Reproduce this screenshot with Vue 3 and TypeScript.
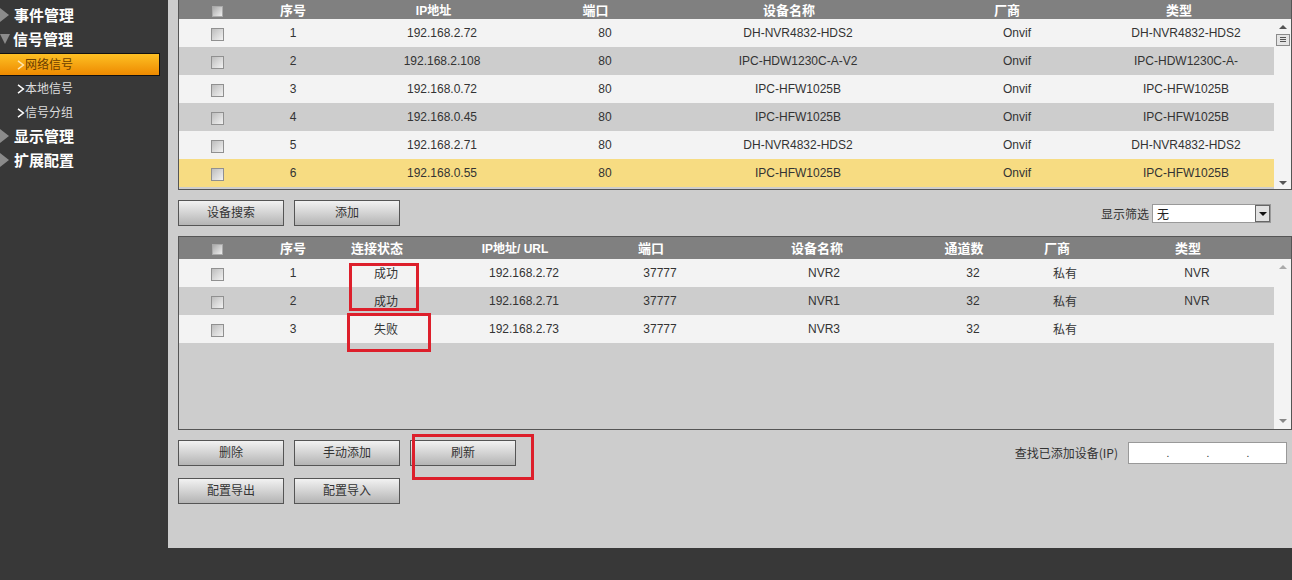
<script setup lang="ts">
interface Found {
  no: number
  ip: string
  name: string
  type: string
}
interface Added {
  no: number
  state: string
  ip: string
  name: string
  vendor: string
  type: string
}

const foundHead = ['序号', 'IP地址', '端口', '设备名称', '厂商', '类型']
const addedHead = ['序号', '连接状态', 'IP地址/ URL', '端口', '设备名称', '通道数', '厂商', '类型']

const found: Found[] = [
  { no: 1, ip: '192.168.2.72', name: 'DH-NVR4832-HDS2', type: 'DH-NVR4832-HDS2' },
  { no: 2, ip: '192.168.2.108', name: 'IPC-HDW1230C-A-V2', type: 'IPC-HDW1230C-A-' },
  { no: 3, ip: '192.168.0.72', name: 'IPC-HFW1025B', type: 'IPC-HFW1025B' },
  { no: 4, ip: '192.168.0.45', name: 'IPC-HFW1025B', type: 'IPC-HFW1025B' },
  { no: 5, ip: '192.168.2.71', name: 'DH-NVR4832-HDS2', type: 'DH-NVR4832-HDS2' },
  { no: 6, ip: '192.168.0.55', name: 'IPC-HFW1025B', type: 'IPC-HFW1025B' },
]

const added: Added[] = [
  { no: 1, state: '成功', ip: '192.168.2.72', name: 'NVR2', vendor: '私有', type: 'NVR' },
  { no: 2, state: '成功', ip: '192.168.2.71', name: 'NVR1', vendor: '私有', type: 'NVR' },
  { no: 3, state: '失败', ip: '192.168.2.73', name: 'NVR3', vendor: '私有', type: '' },
]

const subMenu = ['网络信号', '本地信号', '信号分组']
</script>

<template>
  <div class="page">
    <aside class="side">
      <div class="group"><i class="tri"></i>事件管理</div>
      <div class="group"><i class="tri open"></i>信号管理</div>
      <div v-for="(s, i) in subMenu" :key="s" class="sub" :class="{ active: i === 0 }">
        <svg class="gt" width="8" height="10" viewBox="0 0 8 10">
          <path d="M1 .8 6.4 5 1 9.2" fill="none" stroke="currentColor" stroke-width="1.5" />
        </svg>
        {{ s }}
      </div>
      <div class="group"><i class="tri"></i>显示管理</div>
      <div class="group"><i class="tri"></i>扩展配置</div>
    </aside>

    <div class="right">
      <main class="content">
        <!-- 搜索到的设备 -->
        <section class="table top">
          <div class="head found-head">
            <span><i class="check small"></i></span>
            <span v-for="h in foundHead" :key="h" :class="{ narrow: h.includes('IP') }">{{ h }}</span>
          </div>
          <div class="body">
            <div class="rows">
              <div
                v-for="r in found"
                :key="r.no"
                class="row found-row"
                :class="{ picked: r.no === 6 }"
              >
                <span><i class="check"></i></span>
                <span>{{ r.no }}</span>
                <span>{{ r.ip }}</span>
                <span>80</span>
                <span>{{ r.name }}</span>
                <span>Onvif</span>
                <span>{{ r.type }}</span>
              </div>
            </div>
            <div class="bar">
              <i class="up"></i>
              <svg class="thumb" width="14" height="12" viewBox="0 0 14 12">
                <rect x="0.5" y="0.5" width="13" height="11" fill="#e4e4e4" stroke="#8a8a8a" />
                <path d="M4 3.5h6M4 5.5h6M4 7.5h6" stroke="#555" fill="none" />
              </svg>
              <i class="down"></i>
            </div>
          </div>
        </section>

        <div class="tools first">
          <button class="btn"><span>设备搜索</span></button>
          <button class="btn"><span>添加</span></button>
          <label class="filter">
            显示筛选
            <span class="select">无<i class="select-btn"></i></span>
          </label>
        </div>

        <!-- 已添加设备 -->
        <section class="table bottom">
          <div class="head added-head">
            <span><i class="check small"></i></span>
            <span v-for="h in addedHead" :key="h" :class="{ narrow: h.includes('IP') }">{{ h }}</span>
          </div>
          <div class="body grow">
            <div class="rows">
              <div v-for="r in added" :key="r.no" class="row added-row">
                <span><i class="check"></i></span>
                <span>{{ r.no }}</span>
                <span class="cjk">{{ r.state }}</span>
                <span>{{ r.ip }}</span>
                <span>37777</span>
                <span>{{ r.name }}</span>
                <span>32</span>
                <span class="cjk">{{ r.vendor }}</span>
                <span>{{ r.type }}</span>
              </div>
            </div>
            <div class="bar">
              <i class="up light"></i>
              <i class="down light"></i>
            </div>
          </div>
          <i class="mark mark-ok"></i>
          <i class="mark mark-fail"></i>
        </section>

        <div class="tools second">
          <button class="btn"><span>删除</span></button>
          <button class="btn"><span>手动添加</span></button>
          <button class="btn refresh"><span>刷新</span><i class="mark mark-refresh"></i></button>
          <label class="find">
            <span class="find-text">查找已添加设备(IP)</span>
            <span class="ip-input"><b>.</b><b>.</b><b>.</b></span>
          </label>
        </div>
        <div class="tools third">
          <button class="btn"><span>配置导出</span></button>
          <button class="btn"><span>配置导入</span></button>
        </div>
      </main>
    </div>
  </div>
</template>

<style>
html,
body {
  margin: 0;
  background: #383838;
}
</style>

<style scoped>
.page {
  display: flex;
  width: 1292px;
  height: 580px;
  overflow: hidden;
  background: #383838;
  color: #333;
  font: 12px "Liberation Sans", "Noto Sans CJK SC", sans-serif;
}

/* 左侧菜单 */
.side {
  width: 168px;
  flex: none;
  padding-top: 3px;
  box-sizing: border-box;
}
.group {
  display: flex;
  align-items: center;
  box-sizing: border-box;
  height: 24px;
  padding-bottom: 2px;
  color: #fff;
  font: bold 15px "Noto Sans CJK SC", sans-serif;
}
.tri {
  width: 0;
  height: 0;
  margin-top: 2px;
  margin-right: 5px;
  border-left: 9px solid #8b8b8b;
  border-top: 7px solid transparent;
  border-bottom: 7px solid transparent;
}
.tri.open {
  margin-right: 3px;
  border-left: 5.5px solid transparent;
  border-right: 5.5px solid transparent;
  border-top: 10px solid #8b8b8b;
  border-bottom: 0;
}
.sub {
  display: flex;
  align-items: center;
  box-sizing: border-box;
  height: 24px;
  padding-left: 17px;
  padding-bottom: 2px;
  color: #ddd;
  font: 12px "Noto Sans CJK SC", sans-serif;
}
.gt {
  flex: none;
  margin-top: 3px;
  color: #fff;
}
.sub.active {
  width: 160px;
  height: 23px;
  margin-top: 2px;
  border: 1px solid #111;
  border-left: 0;
  color: #6b3f00;
  background: linear-gradient(#fdc024, #ee8a00);
}
.sub.active .gt {
  color: #ffe6b0;
}

/* 右侧内容 */
.right {
  flex: 1;
  min-width: 0;
}
.content {
  box-sizing: border-box;
  height: 548px;
  padding-left: 10px;
  background: #cdcdcd;
}

.table {
  position: relative;
  display: flex;
  flex-direction: column;
  box-sizing: border-box;
  border: 1px solid #555;
}
.table.top {
  height: 190px;
  border-top: 0;
}
.table.bottom {
  height: 194px;
  margin-top: 10px;
}
.head,
.row {
  display: grid;
  align-items: center;
  text-align: center;
}
.head {
  flex: none;
  box-sizing: border-box;
  color: #fff;
  background: #808080;
  font: bold 13px "Liberation Sans", "Noto Sans CJK SC", sans-serif;
}
.head .narrow {
  font-size: 12px;
}
.top .head {
  height: 19px;
  padding-bottom: 4px;
}
.bottom .head {
  height: 22px;
  padding-bottom: 1px;
}
.found-head {
  grid-template-columns: 76px 76px 205px 119px 268px 168px 176px;
}
.found-row {
  grid-template-columns: 76px 76px 222px 104px 282px 156px 182px;
}
.added-head {
  grid-template-columns: 76px 76px 92px 184px 88px 244px 50px 136px 126px;
}
.added-row {
  grid-template-columns: 76px 76px 110px 166px 106px 222px 76px 108px 156px;
}
.body {
  display: flex;
  flex: 1;
  min-height: 0;
}
.rows {
  flex: 1;
  min-width: 0;
}
.row {
  height: 28px;
  background: #f3f3f3;
}
.row:nth-child(even) {
  background: #cdcdcd;
}
.row.picked {
  background: #f7dc82;
}
.cjk {
  padding-bottom: 2px;
  font-family: "Noto Sans CJK SC", sans-serif;
}
.check {
  display: block;
  box-sizing: border-box;
  width: 13px;
  height: 13px;
  margin: 2px auto 0;
  border: 1px solid #909090;
  background: linear-gradient(135deg, #bdbdbd, #f2f2f2);
}
.check.small {
  width: 11px;
  height: 11px;
  margin-top: 3px;
  border-color: #aaa;
  background: linear-gradient(135deg, #aaa, #eee);
}

/* 滚动条 */
.bar {
  display: flex;
  flex: none;
  flex-direction: column;
  align-items: center;
  width: 17px;
  padding: 6px 0;
  box-sizing: border-box;
  background: #f3f3f3;
}
.top .bar {
  padding-bottom: 4px;
}
.up,
.down {
  width: 0;
  height: 0;
  border-left: 4px solid transparent;
  border-right: 4px solid transparent;
}
.up {
  border-bottom: 4px solid #555;
}
.down {
  margin-top: auto;
  border-top: 4px solid #555;
}
.up.light {
  border-bottom-color: #aaa;
}
.down.light {
  border-top-color: #888;
}
.thumb {
  margin-top: 5px;
}

/* 按钮行 */
.tools {
  display: flex;
  align-items: flex-start;
  gap: 10px;
  height: 26px;
}
.tools.first,
.tools.second {
  margin-top: 10px;
}
.tools.third {
  margin-top: 12px;
}
.btn {
  position: relative;
  box-sizing: border-box;
  width: 106px;
  height: 26px;
  padding: 0 0 3px;
  border: 1px solid #555;
  color: #333;
  background: linear-gradient(#f2f2f2, #b4b4b4);
  font: 12px "Noto Sans CJK SC", sans-serif;
}
.filter {
  display: flex;
  align-items: center;
  gap: 3px;
  margin: 4px 21px 0 auto;
  font-family: "Noto Sans CJK SC", sans-serif;
}
.select {
  position: relative;
  display: block;
  box-sizing: border-box;
  width: 119px;
  height: 19px;
  padding-left: 4px;
  border: 1px solid #999;
  background: #fff;
  color: #222;
  line-height: 17px;
}
.select-btn {
  position: absolute;
  top: 0;
  right: 0;
  width: 15px;
  height: 17px;
  box-sizing: border-box;
  border: 1px solid #666;
  background: #e2e2e2;
}
.select-btn::after {
  content: "";
  position: absolute;
  top: 6px;
  left: 3px;
  border-left: 4px solid transparent;
  border-right: 4px solid transparent;
  border-top: 4px solid #111;
}
.find {
  display: flex;
  align-items: center;
  gap: 10px;
  margin: 2px 5px 0 auto;
  font-family: "Noto Sans CJK SC", sans-serif;
}
.find-text {
  padding-bottom: 2px;
}
.ip-input {
  display: grid;
  grid-template-columns: repeat(3, 40px);
  justify-content: center;
  box-sizing: border-box;
  width: 159px;
  height: 22px;
  padding-left: 38px;
  border: 1px solid #999;
  background: #fff;
  line-height: 20px;
  font-size: 10px;
}
.ip-input b {
  font-weight: normal;
}

/* 红色标注框 */
.mark {
  position: absolute;
  box-sizing: border-box;
  border: 3px solid #dd1f2b;
  pointer-events: none;
}
.mark-ok {
  top: 26px;
  left: 170px;
  width: 70px;
  height: 48px;
}
.mark-fail {
  top: 76px;
  left: 168px;
  width: 84px;
  height: 39px;
}
.mark-refresh {
  top: -7px;
  left: 1px;
  width: 122px;
  height: 46px;
}
</style>
